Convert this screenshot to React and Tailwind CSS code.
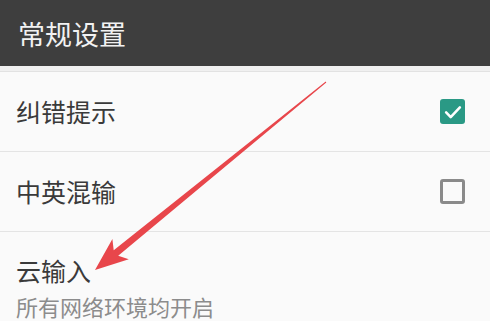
import React from "react";

function Check({ checked }) {
  if (checked) {
    return (
      <div className="w-[25px] h-[25px] rounded-[3px] bg-[#2a9985] flex items-center justify-center">
        <svg width="22" height="22" viewBox="0 0 24 24" fill="none" stroke="#ffffff" strokeWidth="2.8" strokeLinecap="round" strokeLinejoin="round">
          <path d="M4.5 12.5l5 5L19.5 7" />
        </svg>
      </div>
    );
  }
  return <div className="w-[25px] h-[25px] rounded-[3px] border-[3px] border-[#8a8a8a]" />;
}

export default function App() {
  const tail = [326, 82];
  const tip = [95, 270];
  const dx = tip[0] - tail[0], dy = tip[1] - tail[1];
  const len = Math.hypot(dx, dy);
  const u = [dx / len, dy / len];
  const n = [-u[1], u[0]];
  const headLen = 33, headHalf = 13;
  const base = [tip[0] - headLen * u[0], tip[1] - headLen * u[1]];
  const neck = [tip[0] - (headLen - 6) * u[0], tip[1] - (headLen - 6) * u[1]];
  const p = (pt) => `${pt[0].toFixed(1)},${pt[1].toFixed(1)}`;
  const shaft = [
    [tail[0] + 0.5 * n[0], tail[1] + 0.5 * n[1]],
    [neck[0] + 3.5 * n[0], neck[1] + 3.5 * n[1]],
    [base[0] + headHalf * n[0], base[1] + headHalf * n[1]],
    tip,
    [base[0] - headHalf * n[0], base[1] - headHalf * n[1]],
    [neck[0] - 3.5 * n[0], neck[1] - 3.5 * n[1]],
    [tail[0] - 0.5 * n[0], tail[1] - 0.5 * n[1]],
  ];

  return (
    <div
      className="relative w-[490px] h-[321px] overflow-hidden bg-[#fafafa]"
      style={{ fontFamily: '"Noto Sans CJK SC", "Noto Sans", sans-serif' }}
    >
      <div className="h-[66px] bg-[#3e3e3e] flex items-center pl-[18px]">
        <span className="text-[27px] text-[#f2f2f2] leading-none">常规设置</span>
      </div>
      <div className="h-[6px] bg-[#f0f0f0] border-b border-[#e2e2e2]" />
      <div className="h-[80px] flex items-center justify-between pl-[16px] pr-[25px] border-b border-[#e4e4e4]">
        <span className="text-[25px] text-[#3a3a3a] leading-none">纠错提示</span>
        <Check checked />
      </div>
      <div className="h-[80px] flex items-center justify-between pl-[16px] pr-[25px] border-b border-[#e4e4e4]">
        <span className="text-[25px] text-[#3a3a3a] leading-none">中英混输</span>
        <Check checked={false} />
      </div>
      <div className="pl-[16px] pt-[26px] flex flex-col">
        <span className="text-[25px] text-[#3a3a3a] leading-none">云输入</span>
        <span className="text-[22px] text-[#8c8c8c] leading-none mt-[12px]">所有网络环境均开启</span>
      </div>
      <svg className="absolute inset-0 pointer-events-none" width="490" height="321">
        <polygon points={shaft.map(p).join(" ")} fill="#e8464b" />
      </svg>
    </div>
  );
}
